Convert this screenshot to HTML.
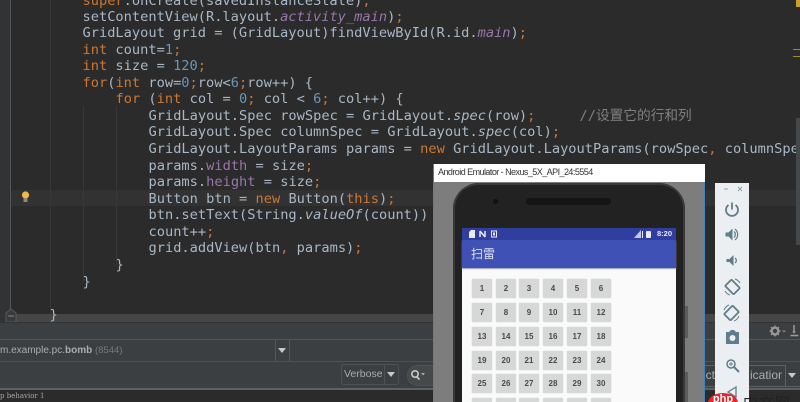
<!DOCTYPE html>
<html><head><meta charset="utf-8">
<style>
html,body{margin:0;padding:0;background:#2b2b2b;width:800px;height:402px;overflow:hidden}
#r{position:relative;width:800px;height:402px;overflow:hidden;background:#2b2b2b}
.a{position:absolute}
#code div{position:absolute;white-space:pre;font:13.68px/16px "DejaVu Sans Mono",monospace;color:#a9b7c6;filter:blur(.35px)}
.k{color:#cc7832}.n{color:#6897bb}.f{color:#9876aa;font-style:italic}.p{color:#9876aa}.i{font-style:italic}.c{color:#808080;font-family:"DejaVu Sans Mono","Noto Sans CJK SC",monospace;margin-left:3px}
.b{position:absolute;width:20px;height:19px;background:#d6d7d7;color:#4a4a4a;font:bold 8px/19px "Liberation Sans",sans-serif;text-align:center;box-shadow:0 0 1px #bbb;border-radius:1px;filter:blur(.3px)}
.ln{position:absolute;width:1px;background:#373737}
</style></head><body>
<div id="r">
<div class="a" style="left:0;top:0;width:10px;height:322px;background:#313335"></div>
<div class="a" style="left:10px;top:0;width:1px;height:314px;background:#555"></div>
<div class="a" style="left:11px;top:190px;width:789px;height:16px;background:#323232"></div>
<div class="ln" style="left:50px;top:0;height:314px"></div>
<div class="ln" style="left:83px;top:106px;height:176px"></div>
<div class="ln" style="left:116px;top:106px;height:160px"></div>

<!-- bottom panels -->
<div class="a" style="left:0;top:322px;width:800px;height:66px;background:#3c3f41"></div>
<div class="a" style="left:16px;top:314px;width:784px;height:8px;background:#464646"></div>
<div class="a" style="left:0;top:322px;width:800px;height:1px;background:#333"></div>
<div class="a" style="left:0;top:339px;width:800px;height:1px;background:#555859"></div>
<div class="a" style="left:0;top:361px;width:800px;height:1px;background:#4f5254"></div>
<div class="a" style="left:0;top:388px;width:800px;height:2px;background:#5e6162"></div>
<div class="a" style="left:0;top:390px;width:800px;height:12px;background:#2b2b2b"></div>

<div id="code">
<div style="left:82.5px;top:-7.500px"><span class="k">super</span>.onCreate(savedInstanceState)<span class="k">;</span></div>
<div style="left:82.5px;top:8.500px">setContentView(R.layout.<span class="f">activity_main</span>)<span class="k">;</span></div>
<div style="left:82.5px;top:25px">GridLayout grid = (GridLayout)findViewById(R.id.<span class="f">main</span>)<span class="k">;</span></div>
<div style="left:82.5px;top:41.500px"><span class="k">int</span> count=<span class="n">1</span><span class="k">;</span></div>
<div style="left:82.5px;top:58px"><span class="k">int</span> size = <span class="n">120</span><span class="k">;</span></div>
<div style="left:82.5px;top:74.500px"><span class="k">for</span>(<span class="k">int</span> row=<span class="n">0</span><span class="k">;</span>row&lt;<span class="n">6</span><span class="k">;</span>row++) {</div>
<div style="left:115.5px;top:91px"><span class="k">for</span> (<span class="k">int</span> col = <span class="n">0</span><span class="k">;</span> col &lt; <span class="n">6</span><span class="k">;</span> col++) {</div>
<div style="left:148.5px;top:107.500px">GridLayout.Spec rowSpec = GridLayout.<span class="i">spec</span>(row)<span class="k">;</span>     <span class="c">//设置它的行和列</span></div>
<div style="left:148.5px;top:124px">GridLayout.Spec columnSpec = GridLayout.<span class="i">spec</span>(col)<span class="k">;</span></div>
<div style="left:148.5px;top:140.500px">GridLayout.LayoutParams params = <span class="k">new</span> GridLayout.LayoutParams(rowSpec<span class="k">,</span> columnSpec)<span class="k">;</span></div>
<div style="left:148.5px;top:157.500px">params.<span class="p">width</span> = size<span class="k">;</span></div>
<div style="left:148.5px;top:174px">params.<span class="p">height</span> = size<span class="k">;</span></div>
<div style="left:148.5px;top:190.500px">Button btn = <span class="k">new</span> Button(<span class="k">this</span>)<span class="k">;</span></div>
<div style="left:148.5px;top:207px">btn.setText(String.<span class="i">valueOf</span>(count))</div>
<div style="left:148.5px;top:223.500px">count++<span class="k">;</span></div>
<div style="left:148.5px;top:240px">grid.addView(btn<span class="k">,</span> params)<span class="k">;</span></div>
<div style="left:115.5px;top:256.500px">}</div>
<div style="left:82.5px;top:273.500px">}</div>
<div style="left:49.5px;top:306.500px">}</div>
</div>
<svg class="a" style="left:20px;top:190px" width="12" height="14" viewBox="0 0 12 14"><circle cx="5.5" cy="5" r="3.6" fill="#f0b848"/><rect x="3.5" y="8" width="4" height="4" fill="#8a8a78"/></svg>

<div class="a" style="left:796px;top:0;width:4px;height:7px;background:#c9a02c"></div>
<div class="a" style="left:793px;top:49px;width:7px;height:1px;background:#a8872a"></div>
<div class="a" style="left:793px;top:56px;width:7px;height:1px;background:#a8872a"></div>
<div class="a" style="left:796px;top:118px;width:4px;height:127px;background:#45484a"></div>

<svg class="a" style="left:5px;top:308px" width="12" height="14" viewBox="0 0 12 14"><path d="M1 14V5l5-4 5 4v9z" fill="#383a3b" stroke="#5a5a5a"/><path d="M3 8h6" stroke="#888"/></svg>

<div class="a" style="left:275px;top:340px;width:1px;height:21px;background:#555859"></div>
<div class="a" style="left:289px;top:340px;width:1px;height:21px;background:#555859"></div>
<div class="a" style="left:0;top:343px;white-space:pre;font:10px/15px 'Liberation Sans',sans-serif;color:#a9adb0;filter:blur(.3px)">m.example.pc.<b>bomb</b> <span style="color:#77797b;font-size:9.500px">(8544)</span></div>
<div class="a" style="left:278px;top:348px;border:4px solid transparent;border-top:5px solid #c8c8c8;border-bottom:0"></div>

<div class="a" style="left:341px;top:364px;width:56px;height:19px;border:1px solid #4f5254;border-radius:3px"></div>
<div class="a" style="left:384px;top:364px;width:1px;height:21px;background:#4f5254"></div>
<div class="a" style="left:344px;top:366px;font:10.500px/17px 'Liberation Sans',sans-serif;color:#a9adb0;filter:blur(.3px)">Verbose</div>
<div class="a" style="left:387px;top:372px;border:4px solid transparent;border-top:5px solid #c8c8c8;border-bottom:0"></div>
<div class="a" style="left:407px;top:365px;width:40px;height:19px;border:1px solid #4f5254;border-radius:11px;background:#45494a"></div>
<svg class="a" style="left:410px;top:369px" width="16" height="12" viewBox="0 0 16 12"><circle cx="5" cy="5" r="3.2" fill="none" stroke="#c8c8c8" stroke-width="1.6"/><path d="M7 8l2.5 2.5" stroke="#c8c8c8" stroke-width="1.6"/><path d="M11 4h4l-2 2.5z" fill="#aaa"/></svg>
<div class="a" style="left:0;top:391px;height:10px;font:7px/10px 'DejaVu Serif','Liberation Serif',serif;color:#a8a8a8;white-space:pre;filter:blur(.25px)">p behavior 1</div>

<!-- right controls -->
<div class="a" style="left:705px;top:365px;width:80px;height:1px;background:#5e6162"></div>
<div class="a" style="left:705px;top:386px;width:95px;height:1px;background:#5e6162"></div>
<div class="a" style="left:705px;top:366px;width:10px;height:19px;overflow:hidden;filter:blur(.3px)"><div style="margin-left:-6px;font:12px/19px 'Liberation Sans',sans-serif;color:#a9adb0">ect</div></div>
<div class="a" style="left:750px;top:366px;font:12px/19px 'Liberation Sans',sans-serif;color:#a9adb0;width:32px;overflow:hidden;filter:blur(.3px)">ication</div>
<div class="a" style="left:785px;top:365px;width:15px;height:21px;border-left:1px solid #5e6162"></div>
<div class="a" style="left:788px;top:373px;border:4px solid transparent;border-top:5px solid #c8c8c8;border-bottom:0"></div>
<svg class="a" style="left:769px;top:324px" width="31" height="14" viewBox="0 0 31 14"><circle cx="6" cy="7" r="3.4" fill="none" stroke="#9a9a9a" stroke-width="2.4"/><path d="M6 1.5v2M6 10.5v2M.5 7h2M9.5 7h2M2 3l1.5 1.5M8.5 9.5L10 11M10 3L8.5 4.500M3.500 9.500L2 11" stroke="#9a9a9a" stroke-width="1.2"/><path d="M13 6.500h4l-2 2z" fill="#888"/><path d="M25 1v8M21.500 11.500h8" stroke="#9a9a9a" stroke-width="1.500"/><path d="M23 7.500h4l-2 2z" fill="#9a9a9a"/></svg>

<!-- emulator -->
<div class="a" style="left:433px;top:164px;width:272px;height:238px;background:#7d7d7d;border-left:1px solid #3f83bf;box-sizing:border-box"></div>
<div class="a" style="left:704px;top:182px;width:1px;height:220px;background:#3f83bf"></div>
<div class="a" style="left:434px;top:164px;width:271px;height:18px;background:#fff;font:9px/17px 'Liberation Sans',sans-serif;letter-spacing:-.55px;color:#333;white-space:pre;text-indent:4px;filter:blur(.2px)">Android Emulator - Nexus_5X_API_24:5554</div>
<div class="a" style="left:453px;top:183px;width:232px;height:219px;background:#222;border-radius:26px 26px 0 0;box-shadow:inset 0 2px 0 #3a3a3a,inset 2px 0 0 #3a3a3a,inset -2px 0 0 #3a3a3a"></div>
<div class="a" style="left:526px;top:198px;width:85px;height:7px;background:#141414;border-radius:4px"></div>
<div class="a" style="left:493px;top:199px;width:5px;height:5px;background:#111;border-radius:50%"></div>
<div class="a" style="left:685px;top:306px;width:3px;height:32px;background:#5c5c5c"></div>
<div class="a" style="left:685px;top:372px;width:3px;height:30px;background:#5c5c5c"></div>
<div class="a" style="left:462px;top:228px;width:214px;height:174px;background:#fafafa"></div>
<div class="a" style="left:462px;top:228px;width:214px;height:12px;background:#303f9f"></div>
<div class="a" style="left:462px;top:240px;width:214px;height:28px;background:#3f51b5;box-shadow:0 1px 1px #9a9fb5"></div>
<div class="a" style="left:471px;top:246px;font:12px/16px 'Noto Sans CJK SC',sans-serif;color:#dfe2f3;filter:blur(.3px)">扫雷</div>
<svg class="a" style="left:468px;top:230px" width="30" height="8" viewBox="0 0 30 8"><path d="M1 2l2-2h4v8H1z" fill="#e8eaf6"/><path d="M12 1v6M12 1l5 6M17 1v6" stroke="#e8eaf6" stroke-width="1.500" fill="none"/><rect x="23.500" y="1" width="5" height="6" fill="none" stroke="#e8eaf6"/><rect x="25" y="2.500" width="2" height="3" fill="#e8eaf6"/></svg>
<svg class="a" style="left:634px;top:230px" width="20" height="8" viewBox="0 0 20 8"><path d="M0 8L7 0v8z" fill="#c5cae9"/><rect x="8" y="1" width="1" height="7" fill="#e8eaf6"/><rect x="12" y="1" width="5" height="7" rx="1" fill="#e8eaf6"/></svg>
<div class="a" style="left:657px;top:229px;font:bold 7.500px/10px 'Liberation Sans',sans-serif;color:#e8eaf6">8:20</div>

<div class="b" style="left:472px;top:279px">1</div><div class="b" style="left:496px;top:279px">2</div><div class="b" style="left:519px;top:279px">3</div><div class="b" style="left:543px;top:279px">4</div><div class="b" style="left:567px;top:279px">5</div><div class="b" style="left:591px;top:279px">6</div>
<div class="b" style="left:472px;top:303px">7</div><div class="b" style="left:496px;top:303px">8</div><div class="b" style="left:519px;top:303px">9</div><div class="b" style="left:543px;top:303px">10</div><div class="b" style="left:567px;top:303px">11</div><div class="b" style="left:591px;top:303px">12</div>
<div class="b" style="left:472px;top:327px">13</div><div class="b" style="left:496px;top:327px">14</div><div class="b" style="left:519px;top:327px">15</div><div class="b" style="left:543px;top:327px">16</div><div class="b" style="left:567px;top:327px">17</div><div class="b" style="left:591px;top:327px">18</div>
<div class="b" style="left:472px;top:351px">19</div><div class="b" style="left:496px;top:351px">20</div><div class="b" style="left:519px;top:351px">21</div><div class="b" style="left:543px;top:351px">22</div><div class="b" style="left:567px;top:351px">23</div><div class="b" style="left:591px;top:351px">24</div>
<div class="b" style="left:472px;top:374px">25</div><div class="b" style="left:496px;top:374px">26</div><div class="b" style="left:519px;top:374px">27</div><div class="b" style="left:543px;top:374px">28</div><div class="b" style="left:567px;top:374px">29</div><div class="b" style="left:591px;top:374px">30</div>
<div class="b" style="left:472px;top:398px;height:4px"></div><div class="b" style="left:496px;top:398px;height:4px"></div><div class="b" style="left:519px;top:398px;height:4px"></div><div class="b" style="left:543px;top:398px;height:4px"></div><div class="b" style="left:567px;top:398px;height:4px"></div><div class="b" style="left:591px;top:398px;height:4px"></div>

<!-- toolbar -->
<div class="a" style="left:715px;top:183px;width:34px;height:219px;background:#eceff1"></div>
<svg class="a" style="left:715px;top:183px;filter:blur(.25px)" width="34" height="219" viewBox="0 0 34 219" fill="none" stroke="#5f7d8a">
<path d="M9 6h4" stroke="#90a4ae"/><path d="M23 4l4 4M27 4l-4 4" stroke="#90a4ae"/>
<path d="M13.500 22a6 6 0 1 0 7 0" stroke-width="1.800"/><path d="M17 19.500v7" stroke-width="1.800"/>
<path d="M10.500 49.500h3l4-4v12l-4-4h-3z" fill="#5f7d8a" stroke="none"/><path d="M19 48.500a4 4 0 0 1 0 6M20 46a7 7 0 0 1 0 11" stroke-width="1.200"/>
<path d="M11.500 76h3l4-4v11l-4-4h-3z" fill="#5f7d8a" stroke="none"/><path d="M20 75a3 3 0 0 1 0 5" stroke-width="1.200"/>
<g transform="rotate(-45 17.500 104)"><rect x="13" y="98" width="9" height="12" rx="1" stroke-width="1.800"/></g><path d="M20 96a9 9 0 0 1 5 4M15 112a9 9 0 0 1-5-4" stroke-width="1"/>
<g transform="rotate(45 16.500 130)"><rect x="12" y="124" width="9" height="12" rx="1" stroke-width="1.800"/></g><path d="M9 127a9 9 0 0 1 5-5M24 133a9 9 0 0 1-5 5" stroke-width="1"/>
<path d="M11 150h3l2-2h3l2 2h3v12H11z" fill="#5f7d8a" stroke="none" transform="translate(0 -1)"/><circle cx="17.500" cy="155" r="3" fill="#eceff1" stroke="none"/>
<circle cx="16" cy="181" r="4" stroke-width="1.500"/><path d="M19 184l5 5" stroke-width="2"/><path d="M14 181h4M16 179v4" stroke-width="1"/>
<path d="M21 204v10l-8-5z" stroke-width="1.300"/>
</svg>

<!-- watermark -->
<div class="a" style="left:707px;top:393px;width:31px;height:9px;overflow:hidden">
<div style="width:30px;height:20px;margin-left:1px;background:#e8232a;border-radius:50%;color:#fff;font:bold 11px/13px 'Liberation Sans',sans-serif;text-align:center">php</div>
</div>
<div class="a" style="left:743px;top:394px;width:50px;height:8px;overflow:hidden;font:15px/17px 'Noto Sans CJK SC',sans-serif;color:#222;white-space:pre;letter-spacing:1px">中文网</div>
</div>
</body></html>
